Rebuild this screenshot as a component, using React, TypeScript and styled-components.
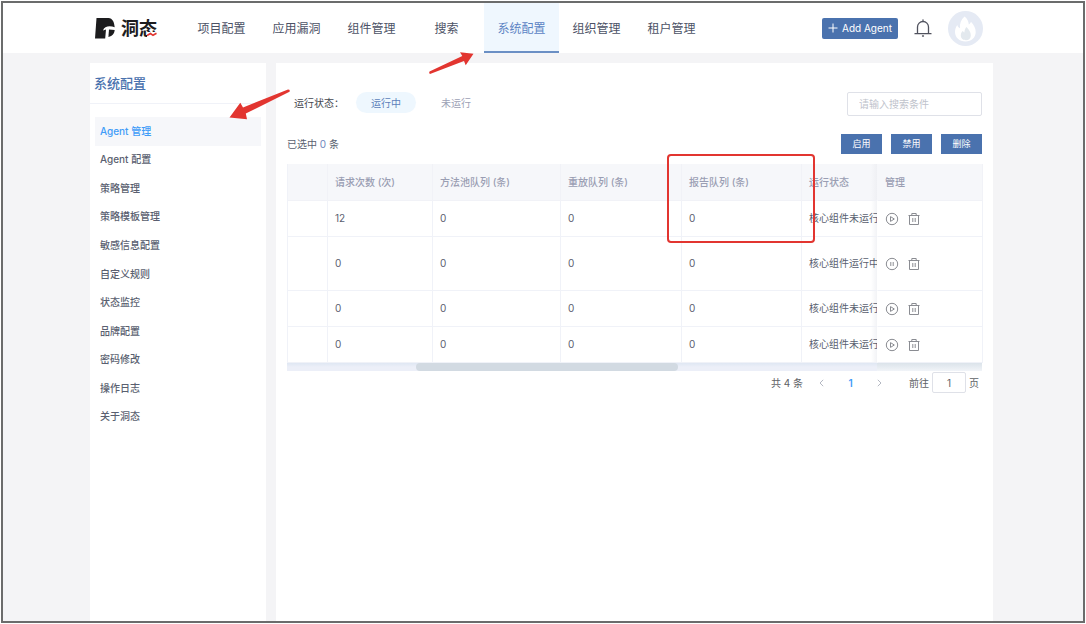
import React from "react";
import styled, { createGlobalStyle, css } from "styled-components";

const blue = "#4a72ae";
const sky = "#3f9cf8";
const ink = "#5a5f70";
const muted = "#9ca1b5";
const line = "#f0f2f8";
const red = "#e23530";

const GlobalStyle = createGlobalStyle`
  *, *::before, *::after { box-sizing: border-box; }
  body {
    margin: 0;
    background: #fff;
    color: ${ink};
    font: 10px/16px Inter, "Noto Sans CJK SC", sans-serif;
  }
  button, input { font: inherit; color: inherit; margin: 0; padding: 0; }
  button { border: 0; background: none; cursor: pointer; }
  a { color: inherit; text-decoration: none; }
  ul { list-style: none; margin: 0; padding: 0; }
  svg { display: block; }
`;

const Frame = styled.div`
  position: relative;
  display: flex;
  flex-direction: column;
  margin: 1px;
  min-height: calc(100vh - 2px);
  border: 2px solid #6b6c6c;
  background: #f4f4f6;
`;

const Header = styled.header`
  display: flex;
  align-items: center;
  height: 50px;
  padding: 0 100px 0 92px;
  background: #fff;
`;

const Logo = styled.a`
  display: flex;
  align-items: center;
  gap: 6px;
  width: 89px;
`;

const LogoName = styled.span`
  position: relative;
  padding-top: 2px;
  font-size: 18px;
  line-height: 24px;
  font-weight: 700;
  color: #1c1c1e;
`;

const LogoWave = styled.svg`
  position: absolute;
  right: 0;
  bottom: 4px;
  background: #fff;
`;

const Nav = styled.nav`
  display: flex;
  align-self: stretch;
  flex: 1;
`;

const NavLink = styled.a<{ $active?: boolean }>`
  display: flex;
  align-items: center;
  justify-content: center;
  width: 75px;
  padding-top: 4px;
  border-bottom: 2px solid transparent;
  font-size: 12px;
  color: #4c5266;
  ${(p) =>
    p.$active &&
    css`
      color: #5c84c4;
      background: #eff7fe;
      border-color: #6b8fc4;
    `}
`;

const Tools = styled.div`
  display: flex;
  align-items: center;
  gap: 16px;
`;

const AddButton = styled.button`
  display: flex;
  align-items: center;
  justify-content: center;
  gap: 4px;
  width: 76px;
  height: 21px;
  border-radius: 2px;
  background: ${blue};
  color: #fff;
`;

const Main = styled.main`
  display: flex;
  flex: 1;
  gap: 10px;
  padding: 10px 90px 0 87px;
`;

const Sidebar = styled.aside`
  flex: none;
  width: 176px;
  background: #fff;
`;

const SideTitle = styled.h2`
  margin: 0;
  padding: 0 4px;
  border-bottom: 1px solid ${line};
  font-size: 13px;
  line-height: 40px;
  font-weight: 500;
  color: ${blue};
`;

const SideMenu = styled.ul`
  display: flex;
  flex-direction: column;
  height: 314px;
  margin: 13px 5px 0;
`;

const SideItem = styled.li`
  display: flex;
  flex: 1;
`;

const SideLink = styled.a<{ $active?: boolean }>`
  display: flex;
  flex: 1;
  align-items: center;
  padding: 0 5px 1px;
  font-weight: 500;
  color: ${(p) => (p.$active ? sky : ink)};
  background: ${(p) => (p.$active ? "#f6f7fa" : "transparent")};
`;

const Card = styled.section`
  flex: 1;
  min-width: 0;
  padding: 29px 11px 0;
  background: #fff;
`;

const FilterRow = styled.div`
  display: flex;
  align-items: flex-start;
  justify-content: space-between;
`;

const Filters = styled.div`
  display: flex;
  align-items: center;
  gap: 10px;
  height: 21px;
  padding-left: 7px;
`;

const FilterLabel = styled.span`
  width: 52px;
  color: #45474f;
`;

const Pill = styled.button<{ $active?: boolean }>`
  width: 60px;
  height: 21px;
  border-radius: 11px;
  color: ${(p) => (p.$active ? "#5c7fba" : muted)};
  background: ${(p) => (p.$active ? "#eef7fe" : "transparent")};
`;

const Search = styled.input`
  width: 135px;
  height: 24px;
  padding: 0 11px;
  border: 1px solid #dfe1e8;
  border-radius: 2px;
  background: #fff;
  &::placeholder { color: #c0c3cc; opacity: 1; }
`;

const ActionRow = styled.div`
  display: flex;
  align-items: center;
  justify-content: space-between;
  margin: 18px 0 10px;
`;

const Count = styled.b`
  font-weight: 400;
  color: #6f86bd;
`;

const Actions = styled.div`
  display: flex;
  gap: 9px;
`;

const ActionButton = styled.button`
  width: 41px;
  height: 20px;
  font-size: 9px;
  color: #fff;
  background: ${blue};
`;

const Table = styled.table`
  width: 100%;
  table-layout: fixed;
  border-spacing: 0;
  border-left: 1px solid ${line};
`;

const cell = css`
  padding: 0 0 1px 7px;
  overflow: hidden;
  white-space: nowrap;
  text-align: left;
  border-right: 1px solid ${line};
  border-bottom: 1px solid ${line};
`;

const Th = styled.th`
  ${cell}
  height: 37px;
  font-weight: 500;
  color: #9a9eb3;
  background: #f6f7fa;
  border-color: #f1f2f7;
`;

const Td = styled.td<{ $tall?: boolean }>`
  ${cell}
  height: ${(p) => (p.$tall ? 54 : 36)}px;
  color: ${ink};
`;

const StatusTh = styled(Th)`
  border-right-color: transparent;
  background: linear-gradient(to left, #eff0f4, #f6f7fa 6px);
`;

const StatusTd = styled(Td)`
  border-right-color: transparent;
  background: linear-gradient(to left, #f2f3f6, #fff 6px);
`;

const RowTools = styled.div`
  display: flex;
  align-items: center;
  gap: 9px;
  padding-top: 1px;
`;

const IconButton = styled.button`
  display: flex;
  color: #8a8c92;
`;

const ScrollTrack = styled.div`
  display: flex;
  height: 8px;
  background: linear-gradient(#dfe7f3, #eceff8 4px);
`;

const ScrollThumb = styled.div`
  width: 262px;
  margin-left: 129px;
  border-radius: 4px;
  background: #d2dae2;
`;

const PinnedShadow = styled.div`
  width: 105px;
  margin-left: auto;
  background: linear-gradient(#dbe3ea, #f1f4f8);
`;

const Pager = styled.div`
  display: flex;
  align-items: center;
  justify-content: flex-end;
  height: 21px;
  margin-top: 1px;
  padding-right: 3px;
  color: #606266;
`;

const Total = styled.span`
  margin-right: 4px;
`;

const PageButton = styled.button<{ $active?: boolean }>`
  display: flex;
  align-items: center;
  justify-content: center;
  width: 29px;
  height: 21px;
  font-weight: 600;
  color: ${(p) => (p.$active ? sky : "#b4b8c2")};
`;

const Jump = styled.label`
  display: flex;
  align-items: center;
  gap: 3px;
  margin-left: 15px;
`;

const JumpInput = styled.input`
  width: 34px;
  height: 21px;
  border: 1px solid #dfe1e8;
  border-radius: 2px;
  text-align: center;
`;

const Arrows = styled.svg`
  position: absolute;
  left: 226px;
  top: 47px;
  pointer-events: none;
`;

const Highlight = styled.div`
  position: absolute;
  left: 664px;
  top: 151px;
  width: 148px;
  height: 89px;
  border: 2px solid ${red};
  border-radius: 4px;
  pointer-events: none;
`;

const LogoMark = () => (
  <svg width="20" height="21" viewBox="0 0 20 21" fill="#1c1c1e" aria-hidden="true">
    <path d="M1.500 0H13.500C17.500.3 19.300 4 19.700 9.300 15 7.300 9.300 8 8 12.500L11 11.400 10.200 20.500H0z" />
    <path d="M14 11.500 19.700 12C19.300 15.500 17.500 18 13.400 19z" />
  </svg>
);

const Plus = () => (
  <svg width="10" height="10" viewBox="0 0 10 10" stroke="currentColor" aria-hidden="true">
    <path d="M5 .5v9M.5 5h9" />
  </svg>
);

const Bell = () => (
  <svg width="18" height="18" viewBox="0 0 18 18" fill="none" stroke="#50525e" strokeWidth="1.300" strokeLinecap="round" aria-hidden="true">
    <path d="M3.500 14.500V8a5.500 5.500 0 0 1 11 0v6.500M1 14.700h16M9 .8v1.500M8.500 17h1" />
  </svg>
);

const Avatar = () => (
  <svg width="35" height="35" viewBox="0 0 35 35" aria-hidden="true">
    <circle cx="17.500" cy="17.500" r="17.500" fill="#e5eaf4" />
    <path d="M16.500 5.500c3 2 4 5 4.300 8 1-.6 1.900-1.500 2.200-2.700 3 3.200 4.700 6.700 4.700 10.200 0 5.500-4.200 9.500-10.200 9.500S7 26.500 7 21c0-2.700.9-5 2.300-7 .4 1.700 1.300 2.700 2.700 3.200-.5-4.700 1-8.700 4.500-11.700z" fill="#fff" />
    <path d="M18.500 16c2.500 2.500 4.300 5 4.300 8.500 0 3-2 4.800-4.800 4.800s-5.200-1.700-5.200-4.700c0-2.200.8-3.700 2.200-4.900.2 1 .7 1.500 1.400 1.700.1-2.200.8-4 2.100-5.400z" fill="#e3e9ee" />
  </svg>
);

const StateIcon = ({ running }: { running: boolean }) => (
  <svg width="14" height="14" viewBox="0 0 14 14" fill="none" stroke="currentColor" strokeLinejoin="round" aria-hidden="true">
    <circle cx="7" cy="7" r="5.700" />
    <path d={running ? "M5.800 5v4M8.200 5v4" : "M5.500 4.600v4.800L9.300 7z"} />
  </svg>
);

const Trash = () => (
  <svg width="12" height="14" viewBox="0 0 12 14" fill="none" stroke="currentColor" aria-hidden="true">
    <path d="M.5 3.500h11M3.800 3.500v-2h4.400v2M1.500 3.500v9h9v-9M4.800 6v4M7.200 6v4" />
  </svg>
);

const Chevron = ({ next }: { next?: boolean }) => (
  <svg width="5" height="8" viewBox="0 0 5 8" fill="none" stroke="currentColor" aria-hidden="true">
    <path d={next ? "M.8.8 4 4 .8 7.200" : "M4.200.8 1 4l3.200 3.200"} />
  </svg>
);

const navItems = ["项目配置", "应用漏洞", "组件管理", "搜索", "系统配置", "组织管理", "租户管理"];

const menuItems = [
  "Agent 管理",
  "Agent 配置",
  "策略管理",
  "策略模板管理",
  "敏感信息配置",
  "自定义规则",
  "状态监控",
  "品牌配置",
  "密码修改",
  "操作日志",
  "关于洞态",
];

const columnWidths = [40, 105, 128, 121, 120, 76, 105];

const agents = [
  { requests: 12, running: false },
  { requests: 0, running: true },
  { requests: 0, running: false },
  { requests: 0, running: false },
];

export default function App() {
  return (
    <>
      <GlobalStyle />
      <Frame>
        <Header>
          <Logo href="#">
            <LogoMark />
            <LogoName>
              洞态
              <LogoWave width="10" height="5" viewBox="0 0 10 5" fill="none" stroke={red} strokeWidth="1.600" aria-hidden="true">
                <path d="M0 3.500 3.500 1.500 6 3.300 9.500 1.200" />
              </LogoWave>
            </LogoName>
          </Logo>
          <Nav>
            {navItems.map((name) => (
              <NavLink key={name} href="#" $active={name === "系统配置"}>
                {name}
              </NavLink>
            ))}
          </Nav>
          <Tools>
            <AddButton type="button">
              <Plus />
              Add Agent
            </AddButton>
            <IconButton type="button" aria-label="通知">
              <Bell />
            </IconButton>
            <Avatar />
          </Tools>
        </Header>

        <Main>
          <Sidebar>
            <SideTitle>系统配置</SideTitle>
            <SideMenu>
              {menuItems.map((name, i) => (
                <SideItem key={name}>
                  <SideLink href="#" $active={i === 0}>
                    {name}
                  </SideLink>
                </SideItem>
              ))}
            </SideMenu>
          </Sidebar>

          <Card>
            <FilterRow>
              <Filters>
                <FilterLabel>运行状态：</FilterLabel>
                <Pill type="button" $active>
                  运行中
                </Pill>
                <Pill type="button">未运行</Pill>
              </Filters>
              <Search type="text" placeholder="请输入搜索条件" aria-label="搜索" />
            </FilterRow>

            <ActionRow>
              <span>
                已选中 <Count>0</Count> 条
              </span>
              <Actions>
                <ActionButton type="button">启用</ActionButton>
                <ActionButton type="button">禁用</ActionButton>
                <ActionButton type="button">删除</ActionButton>
              </Actions>
            </ActionRow>

            <Table>
              <colgroup>
                {columnWidths.map((width, i) => (
                  <col key={i} width={width} />
                ))}
              </colgroup>
              <thead>
                <tr>
                  <Th />
                  <Th>请求次数 (次)</Th>
                  <Th>方法池队列 (条)</Th>
                  <Th>重放队列 (条)</Th>
                  <Th>报告队列 (条)</Th>
                  <StatusTh>运行状态</StatusTh>
                  <Th>管理</Th>
                </tr>
              </thead>
              <tbody>
                {agents.map(({ requests, running }, i) => (
                  <tr key={i}>
                    <Td $tall={running} />
                    <Td>{requests}</Td>
                    <Td>0</Td>
                    <Td>0</Td>
                    <Td>0</Td>
                    <StatusTd>{running ? "核心组件运行中" : "核心组件未运行"}</StatusTd>
                    <Td>
                      <RowTools>
                        <IconButton type="button" aria-label={running ? "暂停" : "启动"}>
                          <StateIcon running={running} />
                        </IconButton>
                        <IconButton type="button" aria-label="删除">
                          <Trash />
                        </IconButton>
                      </RowTools>
                    </Td>
                  </tr>
                ))}
              </tbody>
            </Table>
            <ScrollTrack>
              <ScrollThumb />
              <PinnedShadow />
            </ScrollTrack>

            <Pager>
              <Total>共 4 条</Total>
              <PageButton type="button" aria-label="上一页">
                <Chevron />
              </PageButton>
              <PageButton type="button" $active>
                1
              </PageButton>
              <PageButton type="button" aria-label="下一页">
                <Chevron next />
              </PageButton>
              <Jump>
                前往
                <JumpInput type="text" defaultValue="1" />页
              </Jump>
            </Pager>
          </Card>
        </Main>

        <Arrows width="248" height="74" viewBox="229 50 248 74" fill={red} aria-hidden="true">
          <path d="M229.500 117.500 240.300 102.700 243 107.500 288 89.500Q290.500 89.500 289.500 91.800L245.800 113.500 247 119.200Z" />
          <path d="M473.500 53.700 460 52.300 462.300 56 429.500 71.500Q428.500 73 430 74L464 61 465.700 65.200Z" />
        </Arrows>
        <Highlight />
      </Frame>
    </>
  );
}
